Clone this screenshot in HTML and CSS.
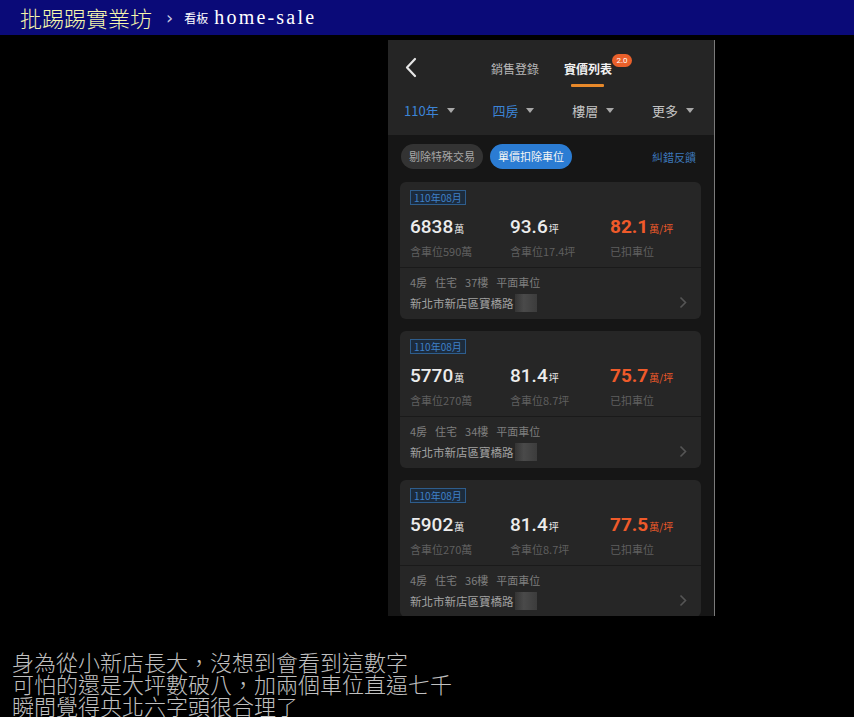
FILE: index.html
```html
<!DOCTYPE html>
<html lang="zh-Hant">
<head>
<meta charset="utf-8">
<title>home-sale</title>
<link rel="stylesheet" href="styles.css">
</head>
<body>
<div class="topbar">
  <span class="site">批踢踢實業坊</span>
  <span class="sep">›</span>
  <span class="board-label">看板</span>
  <span class="board">home-sale</span>
</div>
<div class="content">
  <div class="phone">
    <div class="app-head">
      <div class="nav">
        <svg class="back" width="14" height="21" viewBox="0 0 14 21"><polyline points="11,2 3,10.5 11,19" fill="none" stroke="#e6e6e6" stroke-width="2.2" stroke-linecap="round" stroke-linejoin="round"/></svg>
        <div class="tabs">
          <span class="tab">銷售登錄</span>
          <span class="tab active">實價列表<span class="badge">2.0</span><span class="underline"></span></span>
        </div>
      </div>
      <div class="filters">
        <span class="filter blue">110年<i class="tri"></i></span>
        <span class="filter blue">四房<i class="tri"></i></span>
        <span class="filter">樓層<i class="tri"></i></span>
        <span class="filter">更多<i class="tri"></i></span>
      </div>
    </div>
    <div class="list">
      <div class="chips">
        <span class="chip">剔除特殊交易</span>
        <span class="chip on">單價扣除車位</span>
        <span class="feedback">糾錯反饋</span>
      </div>

      <div class="card">
        <div class="card-top">
          <span class="tag">110年08月</span>
          <div class="stats">
            <div class="stat"><div class="num">6838<small>萬</small></div><div class="sub">含車位590萬</div></div>
            <div class="stat"><div class="num">93.6<small>坪</small></div><div class="sub">含車位17.4坪</div></div>
            <div class="stat"><div class="num orange">82.1<small>萬/坪</small></div><div class="sub">已扣車位</div></div>
          </div>
        </div>
        <div class="card-bottom">
          <div class="info">4房<span>住宅</span><span>37樓</span><span>平面車位</span></div>
          <div class="addr-row"><span class="addr">新北市新店區寶橋路</span><span class="blur"></span><svg class="chev" width="8" height="13" viewBox="0 0 8 13"><polyline points="1.5,1.5 6.5,6.5 1.5,11.5" fill="none" stroke="#555" stroke-width="1.6"/></svg></div>
        </div>
      </div>

      <div class="card">
        <div class="card-top">
          <span class="tag">110年08月</span>
          <div class="stats">
            <div class="stat"><div class="num">5770<small>萬</small></div><div class="sub">含車位270萬</div></div>
            <div class="stat"><div class="num">81.4<small>坪</small></div><div class="sub">含車位8.7坪</div></div>
            <div class="stat"><div class="num orange">75.7<small>萬/坪</small></div><div class="sub">已扣車位</div></div>
          </div>
        </div>
        <div class="card-bottom">
          <div class="info">4房<span>住宅</span><span>34樓</span><span>平面車位</span></div>
          <div class="addr-row"><span class="addr">新北市新店區寶橋路</span><span class="blur"></span><svg class="chev" width="8" height="13" viewBox="0 0 8 13"><polyline points="1.5,1.5 6.5,6.5 1.5,11.5" fill="none" stroke="#555" stroke-width="1.6"/></svg></div>
        </div>
      </div>

      <div class="card">
        <div class="card-top">
          <span class="tag">110年08月</span>
          <div class="stats">
            <div class="stat"><div class="num">5902<small>萬</small></div><div class="sub">含車位270萬</div></div>
            <div class="stat"><div class="num">81.4<small>坪</small></div><div class="sub">含車位8.7坪</div></div>
            <div class="stat"><div class="num orange">77.5<small>萬/坪</small></div><div class="sub">已扣車位</div></div>
          </div>
        </div>
        <div class="card-bottom">
          <div class="info">4房<span>住宅</span><span>36樓</span><span>平面車位</span></div>
          <div class="addr-row"><span class="addr">新北市新店區寶橋路</span><span class="blur"></span><svg class="chev" width="8" height="13" viewBox="0 0 8 13"><polyline points="1.5,1.5 6.5,6.5 1.5,11.5" fill="none" stroke="#555" stroke-width="1.6"/></svg></div>
        </div>
      </div>
    </div>
  </div>
  <div class="post">身為從小新店長大，沒想到會看到這數字<br>可怕的還是大坪數破八，加兩個車位直逼七千<br>瞬間覺得央北六字頭很合理了</div>
</div>
</body>
</html>
```

FILE: styles.css
```css
html, body {
  margin: 0;
  padding: 0;
  background: #000;
  height: 100%;
  overflow: hidden;
}

body {
  font-family: "Noto Sans CJK TC", "Noto Sans", sans-serif;
}

.topbar {
  height: 35px;
  background: #0a0a78;
  display: flex;
  align-items: center;
  padding-left: 20px;
  box-sizing: border-box;
}

.site {
  color: #f6f6ac;
  font-size: 22px;
  line-height: 35px;
  font-family: "Noto Sans CJK TC", sans-serif;
  font-weight: 300;
}

.sep {
  color: #c8c8e0;
  font-size: 18px;
  margin-left: 14px;
  font-family: "DejaVu Sans", sans-serif;
}

.board-label {
  color: #fff;
  font-size: 12px;
  margin-left: 11px;
}

.board {
  color: #fff;
  font-size: 20px;
  margin-left: 6px;
  font-family: "Liberation Serif", serif;
  letter-spacing: 2.2px;
}

.content {
  padding-top: 5px;
}

.phone {
  margin-left: 388px;
  width: 327px;
  height: 576px;
  overflow: hidden;
  background: #161616;
  border-right: 1px solid #7a7a7a;
  box-sizing: border-box;
  font-family: "Noto Sans CJK TC", sans-serif;
}

.app-head {
  background: #252525;
  height: 95px;
}

.nav {
  height: 55px;
  display: flex;
  align-items: center;
  padding-left: 16px;
}

.back {
  display: block;
  margin-top: -1px;
}

.tabs {
  display: flex;
  margin-left: 73px;
  gap: 25px;
  margin-top: 3px;
}

.tab {
  font-size: 12px;
  color: #b8b8b8;
  position: relative;
  line-height: 18px;
}

.tab.active {
  color: #f2f2f2;
  font-weight: 700;
}

.badge {
  position: absolute;
  left: 48px;
  top: -6px;
  width: 20px;
  height: 13px;
  border-radius: 7px;
  background: #e9602b;
  color: #fff;
  font-size: 8px;
  line-height: 13px;
  text-align: center;
  font-family: "Roboto", sans-serif;
  font-weight: 400;
}

.underline {
  position: absolute;
  left: 7px;
  top: 24px;
  width: 33px;
  height: 3px;
  background: #e8892a;
  border-radius: 1px;
}

.filters {
  height: 40px;
  display: flex;
  justify-content: space-between;
  align-items: center;
  padding: 0 20px 9px 16px;
  box-sizing: border-box;
}

.filter {
  font-size: 13px;
  color: #c4c4c4;
  display: flex;
  align-items: center;
}

.filter.blue {
  color: #3c84d6;
}

.tri {
  display: inline-block;
  width: 0;
  height: 0;
  border-left: 4px solid transparent;
  border-right: 4px solid transparent;
  border-top: 5px solid #a8a8a8;
  margin-left: 8px;
}

.list {
  padding-top: 9px;
}

.chips {
  display: flex;
  align-items: center;
  padding: 0 18px 0 13px;
  height: 25px;
}

.chip {
  height: 25px;
  line-height: 25px;
  padding: 0 8px;
  border-radius: 13px;
  background: #333;
  color: #a8a8a8;
  font-size: 11px;
}

.chip.on {
  background: #2b7cd3;
  color: #f4f4f4;
  margin-left: 7px;
}

.feedback {
  margin-left: auto;
  color: #3d78bb;
  font-size: 11px;
}

.card {
  margin: 13px 13px 0 12px;
  background: #262626;
  border-radius: 6px;
}

.card + .card {
  margin-top: 12px;
}

.card-top {
  padding: 8px 10px 8px 10px;
  border-bottom: 1px solid #1a1a1a;
}

.tag {
  display: block;
  width: fit-content;
  height: 13px;
  line-height: 13px;
  padding: 0 3px;
  border: 1px solid #2e5d8c;
  background: #1c2b3c;
  color: #3f80c8;
  font-size: 10px;
}

.stats {
  display: grid;
  grid-template-columns: 100px 100px 1fr;
  margin-top: 9px;
}

.num {
  font-family: "Roboto", "Liberation Sans", sans-serif;
  font-size: 19px;
  line-height: 26px;
  color: #ececec;
  font-weight: 500;
}

.num small {
  font-family: "Noto Sans CJK TC", sans-serif;
  font-size: 10px;
  margin-left: 1px;
  font-weight: 400;
}

.num.orange {
  color: #ef5a2a;
  font-weight: 700;
}

.sub {
  font-size: 11px;
  line-height: 16px;
  color: #5f5f5f;
  margin-top: 1px;
}

.card-bottom {
  padding: 4px 10px 6px 10px;
}

.info {
  font-size: 11px;
  line-height: 20px;
  color: #7e7e7e;
}

.info span {
  margin-left: 8px;
}

.addr-row {
  display: flex;
  align-items: center;
  height: 21px;
}

.addr {
  font-size: 11.5px;
  color: #a2a2a2;
}

.blur {
  width: 22px;
  height: 18px;
  background: linear-gradient(90deg, #343434 0%, #4a4a4a 40%, #3c3c3c 100%);
  margin-left: 1px;
}

.chev {
  margin-left: auto;
  margin-right: 4px;
}

.post {
  margin-top: 34px;
  padding-left: 12px;
  font-size: 22px;
  line-height: 22px;
  color: #c0c0c0;
  font-family: "Noto Sans CJK TC", sans-serif;
  font-weight: 300;
}
```
